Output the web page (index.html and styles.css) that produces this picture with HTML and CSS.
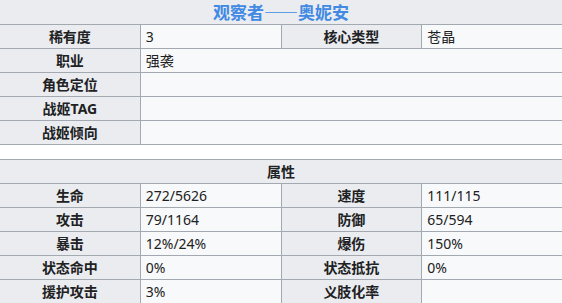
FILE: index.html
```html
<!DOCTYPE html>
<html lang="zh">
<head>
<meta charset="utf-8">
<link rel="stylesheet" href="styles.css">
</head>
<body>
<table class="info first">
  <colgroup><col class="c"><col class="c"><col class="c"><col class="c"></colgroup>
  <tr><th class="title" colspan="4">观察者——奥妮安</th></tr>
  <tr><th>稀有度</th><td>3</td><th>核心类型</th><td>苍晶</td></tr>
  <tr><th>职业</th><td colspan="3">强袭</td></tr>
  <tr><th>角色定位</th><td colspan="3"></td></tr>
  <tr><th>战姬TAG</th><td colspan="3"></td></tr>
  <tr><th>战姬倾向</th><td colspan="3"></td></tr>
</table>
<table class="info second">
  <colgroup><col class="c"><col class="c"><col class="c"><col class="c"></colgroup>
  <tr><th colspan="4">属性</th></tr>
  <tr><th>生命</th><td>272/5626</td><th>速度</th><td>111/115</td></tr>
  <tr><th>攻击</th><td>79/1164</td><th>防御</th><td>65/594</td></tr>
  <tr><th>暴击</th><td>12%/24%</td><th>爆伤</th><td>150%</td></tr>
  <tr><th>状态命中</th><td>0%</td><th>状态抵抗</th><td>0%</td></tr>
  <tr><th>援护攻击</th><td>3%</td><th>义肢化率</th><td></td></tr>
</table>
</body>
</html>
```
FILE: styles.css
```css
html, body {
  margin: 0;
  padding: 0;
  background: #ffffff;
  overflow: hidden;
}
body {
  font-family: "Noto Sans", "Noto Sans CJK SC", sans-serif;
  font-size: 14px;
  color: #202122;
}
.info {
  border-collapse: collapse;
  width: calc(100% + 2px);
  margin-left: -1px;
  table-layout: fixed;
}
.info .c { width: 25%; }
.first { margin-top: -1px; }
.second { margin-top: 14px; }
.info th, .info td {
  border: 1px solid #a2a9b1;
  height: 23px;
  line-height: 23px;
  padding: 0 5px;
  box-sizing: border-box;
  white-space: nowrap;
  overflow: hidden;
}
.info th {
  background: #eaecf0;
  font-weight: bold;
  text-align: center;
}
.info td {
  background: #f8f9fa;
  text-align: left;
}
.info th.title {
  font-family: "Noto Sans CJK SC", sans-serif;
  color: #4189e3;
  font-size: 17px;
  line-height: 24px;
  height: 24px;
}
```
